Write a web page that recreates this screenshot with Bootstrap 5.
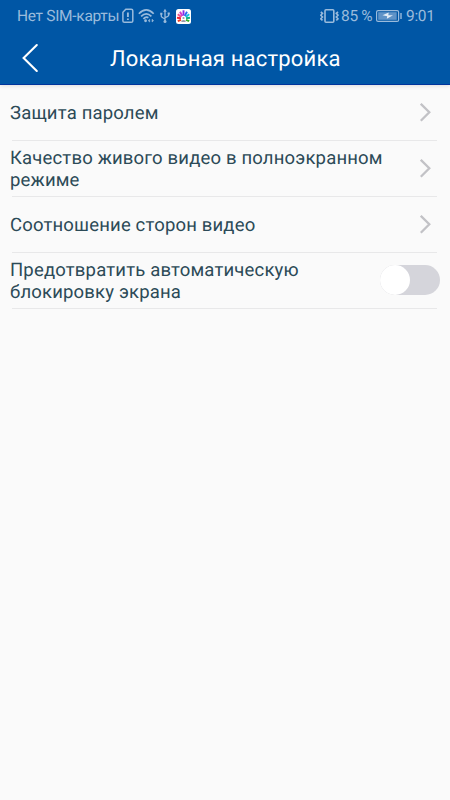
<!DOCTYPE html>
<html lang="ru">
<head>
<meta charset="utf-8">
<meta name="viewport" content="width=device-width, initial-scale=1">
<title>Локальная настройка</title>
<link href="https://cdn.jsdelivr.net/npm/bootstrap@5.3.0/dist/css/bootstrap.min.css" rel="stylesheet">
<style>
  body { background: #fafafa; font-family: Roboto, "Noto Sans", sans-serif; color: #2c4a57; text-rendering: geometricPrecision; }
  .top { background: #0056a5; border-bottom: 1px solid #00349c; box-shadow: 0 1px 4px rgba(0,0,0,.12); height: 85px; }
  .status { height: 32px; padding: 0 15px 0 17px; font-size: 15.5px; line-height: 32px; color: #9abbdc; letter-spacing: -.3px; }
  .status svg { display: block; flex: none; }
  .carrier { width: 105px; }
  .percent { width: 35px; margin-left: 2px; }
  .clock { width: 29px; margin-left: 4px; }
  .usb { margin-left: 5px; }
  .app { margin-left: 6px; }
  .titlebar { height: 52px; padding-left: 21px; }
  .titlebar h1 { font-size: 22px; line-height: 26px; margin: 3px 0 0 71px; font-weight: 400; letter-spacing: .19px; }
  .setting { height: 56px; padding: 0 10px; font-size: 18.5px; line-height: 22px; letter-spacing: .17px; }
  .setting::after { content: ""; display: block; height: 1.5px; margin: 0 3px 0 2px; background: #e8e8e9; flex: none; }
  .caption { padding-top: 2px; max-width: 390px; }
  .narrow { max-width: 320px; }
  .setting .form-check-input { width: 60px; height: 30px; margin: 0; border: 0; background-color: #d5d5db; border-radius: 15px;
    background-image: url("data:image/svg+xml,%3Csvg xmlns='http://www.w3.org/2000/svg' viewBox='0 0 30 30'%3E%3Ccircle cx='15' cy='15' r='15' fill='white'/%3E%3C/svg%3E"); background-size: 30px 30px; background-position: left center; }
</style>
<script src="https://cdn.jsdelivr.net/npm/bootstrap@5.3.0/dist/js/bootstrap.bundle.min.js"></script>
</head>
<body>
<header class="top">
  <div class="status d-flex align-items-center">
    <span class="carrier text-nowrap">Нет SIM-карты</span>
    <svg width="12" height="16" viewBox="0 0 12 16" fill="none" stroke="#9abbdc" stroke-width="1.5"><path d="M3.8 1.2H9.2Q10.8 1.2 10.8 2.8V13Q10.8 14.3 9.2 14.3H2.4Q.9 14.3.9 13V4.2Z"/><path d="M5.9 4.5V9M5.9 10.5V12" stroke-width="1.9"/></svg>
    <svg class="ms-1" width="17" height="16" viewBox="0 0 18 16" fill="none" stroke="#9abbdc" stroke-width="1.8"><path d="M.9 5.6Q8.7-2.4 16.6 5.6M3.3 8.4Q8.7 3 14.2 8.4M5.7 11.1Q8.5 8 11 9.8"/><circle cx="8" cy="13" r="1.5" fill="#9abbdc" stroke="none"/><path d="M10.8 12.9l1.6-1.5v3zM16.5 12.9l-1.6-1.5v3z" fill="#9abbdc" stroke-width=".6"/></svg>
    <svg class="usb" width="10" height="16" viewBox="0 0 10 16" fill="none" stroke="#9abbdc" stroke-width="1.3"><path d="M5 3V13M1.3 6V8.2Q1.3 9 5 11M8.7 5V7.2Q8.7 8.2 5 9.6"/><path d="M3.2 3.8L5 .7 6.8 3.8ZM.2 4.8H2.4V6.8H.2ZM7.6 4.5H9.8V6.5H7.6Z" fill="#9abbdc" stroke="none"/><circle cx="5" cy="13.6" r="1.5" fill="#9abbdc" stroke="none"/></svg>
    <svg class="app" width="15" height="15" viewBox="0 0 15 15"><rect width="15" height="15" rx="2.5" fill="#fff"/><g fill="none" stroke-width="1.9"><path d="M5 9.2L1 8.8" stroke="#e23"/><path d="M5.3 8L1.8 5.2" stroke="#f0508a"/><path d="M6.3 7L4 2.7" stroke="#d13ccc"/><path d="M7.5 6.6V1.3" stroke="#8a2be2"/><path d="M8.7 7L11 2.7" stroke="#2d6cf0"/><path d="M9.7 8L13.2 5.2" stroke="#12bfe0"/><path d="M10 9.2L14 8.8" stroke="#12b080"/><path d="M5 10.8L1.8 12.2" stroke="#f33a1c"/><path d="M10 10.8L13.2 12.2" stroke="#35b02c"/></g><circle cx="7.5" cy="9" r="1.1" fill="#99a"/><path d="M5.4 13V11.8Q7.5 10 9.6 11.8V13Z" fill="#99a"/></svg>
    <svg class="ms-auto" width="19" height="16" viewBox="0 0 19 16" fill="none" stroke="#9abbdc" stroke-width="1.6"><rect x="5" y="1.8" width="8.8" height="12.4" rx="1"/><path d="M.8 3.8L2.5 5.3 .8 7.2 2.5 9 .8 10.8 2.5 12.3M18 3.8L16.3 5.3 18 7.2 16.3 9 18 10.8 16.3 12.3"/></svg>
    <span class="percent text-nowrap">85 %</span>
    <svg width="26" height="12" viewBox="0 0 26 12"><rect x=".6" y=".6" width="22" height="10.8" rx="1.5" fill="none" stroke="#9abbdc" stroke-width="1.2"/><rect x="2.2" y="2.2" width="18.5" height="7.6" fill="#5f93c7"/><path d="M6.5 5.2L12.7 2.6 12.3 5.2H17L10.8 8.8 11.2 6.2Z" fill="#e2edf7"/><path d="M25 3V9" stroke="#9abbdc" stroke-width="1.4"/></svg>
    <span class="clock">9:01</span>
  </div>
  <div class="titlebar d-flex align-items-center text-white">
    <svg width="18" height="30" viewBox="0 0 18 30" fill="none" stroke="#fff" stroke-width="2.1" stroke-linecap="round"><path d="M15.8 2L2.6 15 15.8 28"/></svg>
    <h1 class="text-nowrap">Локальная настройка</h1>
  </div>
</header>
<main>
  <div class="setting d-flex flex-column">
    <div class="d-flex flex-fill align-items-center justify-content-between"><span class="caption">Защита паролем</span><svg width="20" height="20" viewBox="0 0 20 20" fill="none" stroke="#c2c2c6" stroke-width="2.3"><path d="M.8 1.8L9.3 10.3 .8 18.8"/></svg></div>
  </div>
  <div class="setting d-flex flex-column">
    <div class="d-flex flex-fill align-items-center justify-content-between"><span class="caption">Качество живого видео в полноэкранном режиме</span><svg width="20" height="20" viewBox="0 0 20 20" fill="none" stroke="#c2c2c6" stroke-width="2.3"><path d="M.8 1.8L9.3 10.3 .8 18.8"/></svg></div>
  </div>
  <div class="setting d-flex flex-column">
    <div class="d-flex flex-fill align-items-center justify-content-between"><span class="caption">Соотношение сторон видео</span><svg width="20" height="20" viewBox="0 0 20 20" fill="none" stroke="#c2c2c6" stroke-width="2.3"><path d="M.8 1.8L9.3 10.3 .8 18.8"/></svg></div>
  </div>
  <div class="setting d-flex flex-column">
    <div class="d-flex flex-fill align-items-center justify-content-between"><label class="caption narrow" for="lock">Предотвратить автоматическую блокировку экрана</label><div class="form-switch p-0 m-0 d-flex"><input class="form-check-input" type="checkbox" role="switch" id="lock"></div></div>
  </div>
</main>
</body>
</html>
